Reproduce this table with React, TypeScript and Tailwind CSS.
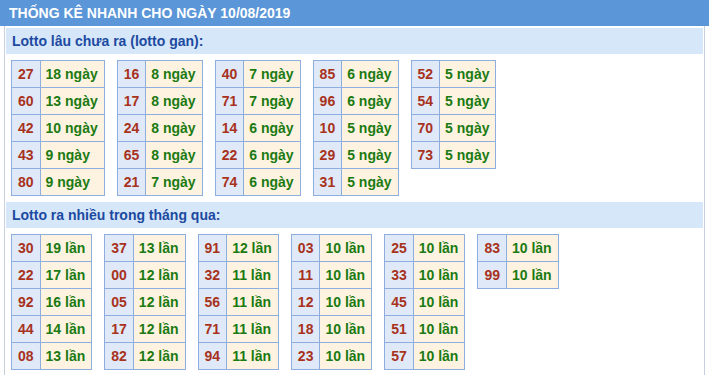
import React from "react";

type Row = [string, string];

const ganTables: Row[][] = [
  [["27", "18 ngày"], ["60", "13 ngày"], ["42", "10 ngày"], ["43", "9 ngày"], ["80", "9 ngày"]],
  [["16", "8 ngày"], ["17", "8 ngày"], ["24", "8 ngày"], ["65", "8 ngày"], ["21", "7 ngày"]],
  [["40", "7 ngày"], ["71", "7 ngày"], ["14", "6 ngày"], ["22", "6 ngày"], ["74", "6 ngày"]],
  [["85", "6 ngày"], ["96", "6 ngày"], ["10", "5 ngày"], ["29", "5 ngày"], ["31", "5 ngày"]],
  [["52", "5 ngày"], ["54", "5 ngày"], ["70", "5 ngày"], ["73", "5 ngày"]],
];

const nhieuTables: Row[][] = [
  [["30", "19 lần"], ["22", "17 lần"], ["92", "16 lần"], ["44", "14 lần"], ["08", "13 lần"]],
  [["37", "13 lần"], ["00", "12 lần"], ["05", "12 lần"], ["17", "12 lần"], ["82", "12 lần"]],
  [["91", "12 lần"], ["32", "11 lần"], ["56", "11 lần"], ["71", "11 lần"], ["94", "11 lần"]],
  [["03", "10 lần"], ["11", "10 lần"], ["12", "10 lần"], ["18", "10 lần"], ["23", "10 lần"]],
  [["25", "10 lần"], ["33", "10 lần"], ["45", "10 lần"], ["51", "10 lần"], ["57", "10 lần"]],
  [["83", "10 lần"], ["99", "10 lần"]],
];

function LotoTable({ rows }: { rows: Row[] }) {
  return (
    <div className="grid grid-cols-[auto_auto] self-start border-l border-t border-[#8eaee0]">
      {rows.map(([num, val]) => (
        <React.Fragment key={num}>
          <div className="flex h-[27px] items-center justify-center border-r border-b border-[#8eaee0] bg-[#dfe9f8] px-[6px] text-[#a8321c]">
            {num}
          </div>
          <div className="flex h-[27px] items-center border-r border-b border-[#8eaee0] bg-[#fef3e0] pl-[5px] pr-[6px] text-[#1b7a12]">
            {val}
          </div>
        </React.Fragment>
      ))}
    </div>
  );
}

function Section({ title, tables }: { title: string; tables: Row[][] }) {
  return (
    <>
      <div className="flex h-[26px] items-center bg-[#d6e7f9] pl-[6px] text-[14px] font-bold text-[#1c4aa0]">
        {title}
      </div>
      <div className="flex gap-3 py-[6px] pl-[5px] text-[14px] font-bold">
        {tables.map((t, i) => (
          <LotoTable key={i} rows={t} />
        ))}
      </div>
    </>
  );
}

export default function App() {
  return (
    <div className="h-[375px] w-[709px] overflow-hidden bg-white font-['Liberation_Sans',Arial,sans-serif]">
      <div className="flex h-[26px] items-center bg-[#5b96d8] pl-[9px] text-[14px] font-bold text-white">
        THỐNG KÊ NHANH CHO NGÀY 10/08/2019
      </div>
      <div className="mx-[4px] h-[349px] border-x border-[#c9cfdf] px-px pt-[2px]">
        <Section title="Lotto lâu chưa ra (lotto gan):" tables={ganTables} />
        <Section title="Lotto ra nhiều trong tháng qua:" tables={nhieuTables} />
      </div>
    </div>
  );
}
